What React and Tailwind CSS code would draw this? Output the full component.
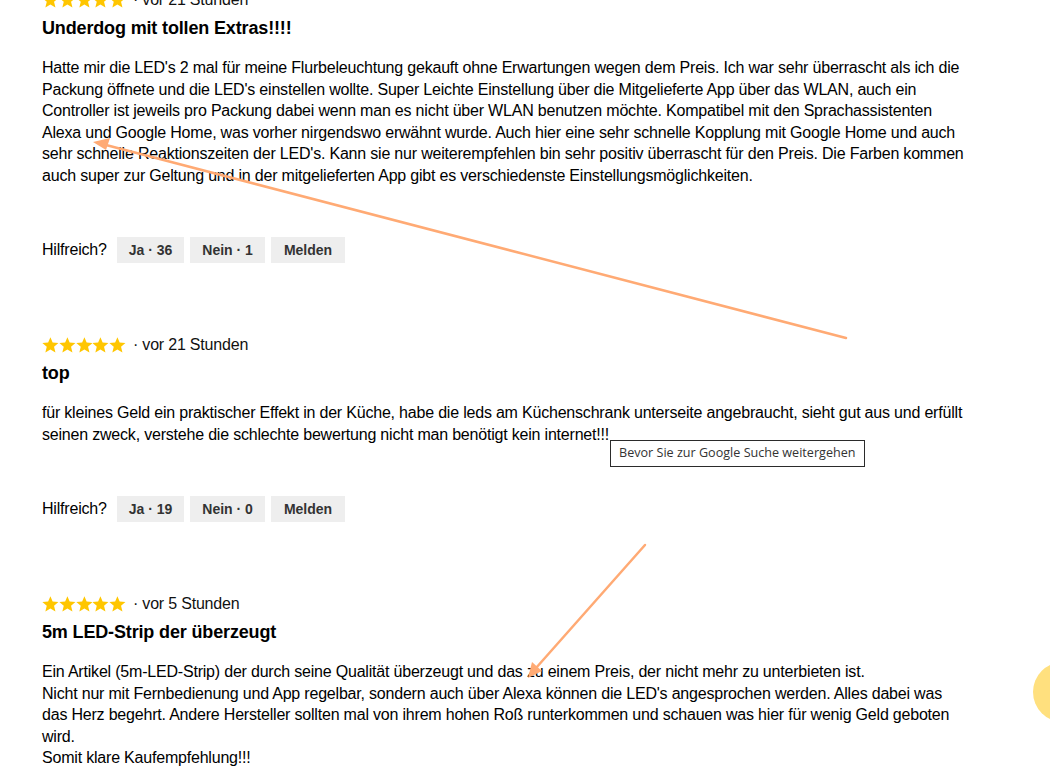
const reviews = [
  {
    time: "vor 21 Stunden",
    title: "Underdog mit tollen Extras!!!!",
    body: "Hatte mir die LED's 2 mal für meine Flurbeleuchtung gekauft ohne Erwartungen wegen dem Preis. Ich war sehr überrascht als ich die Packung öffnete und die LED's einstellen wollte. Super Leichte Einstellung über die Mitgelieferte App über das WLAN, auch ein Controller ist jeweils pro Packung dabei wenn man es nicht über WLAN benutzen möchte. Kompatibel mit den Sprachassistenten Alexa und Google Home, was vorher nirgendswo erwähnt wurde. Auch hier eine sehr schnelle Kopplung mit Google Home und auch sehr schnelle Reaktionszeiten der LED's. Kann sie nur weiterempfehlen bin sehr positiv überrascht für den Preis. Die Farben kommen auch super zur Geltung und in der mitgelieferten App gibt es verschiedenste Einstellungsmöglichkeiten.",
    yes: 36,
    no: 1,
  },
  {
    time: "vor 21 Stunden",
    title: "top",
    body: "für kleines Geld ein praktischer Effekt in der Küche, habe die leds am Küchenschrank unterseite angebraucht, sieht gut aus und erfüllt seinen zweck, verstehe die schlechte bewertung nicht man benötigt kein internet!!!",
    yes: 19,
    no: 0,
  },
  {
    time: "vor 5 Stunden",
    title: "5m LED-Strip der überzeugt",
    body: "Ein Artikel (5m-LED-Strip) der durch seine Qualität überzeugt und das zu einem Preis, der nicht mehr zu unterbieten ist.\nNicht nur mit Fernbedienung und App regelbar, sondern auch über Alexa können die LED's angesprochen werden. Alles dabei was das Herz begehrt. Andere Hersteller sollten mal von ihrem hohen Roß runterkommen und schauen was hier für wenig Geld geboten wird.\nSomit klare Kaufempfehlung!!!",
  },
];

function Stars() {
  return (
    <div className="flex">
      {[0, 1, 2, 3, 4].map((i) => (
        <svg key={i} width="16.8" height="18" viewBox="0 0 24 24">
          <path
            d="M12 1l3.2 7.6 8.3.6-6.3 5.4 2 8.1L12 18.4l-7.2 4.3 2-8.1L.5 9.2l8.3-.6z"
            fill="#ffc600"
          />
        </svg>
      ))}
    </div>
  );
}

function Review({ r }) {
  return (
    <div className="mb-[72px]">
      <div className="flex items-center h-[20px] leading-[20px]">
        <Stars />
        <span className="ml-[7px] text-[16px] tracking-[-0.2px] text-[#111]">· {r.time}</span>
      </div>
      <h3 className="mt-[6px] text-[18px] leading-[24px] font-bold tracking-[-0.15px]">{r.title}</h3>
      <p className="mt-[17px] text-[16px] leading-[21.5px] tracking-[-0.2px] whitespace-pre-line">{r.body}</p>
      {r.yes !== undefined && (
        <div className="mt-[51px] flex items-center gap-[6px]">
          <span className="text-[16px] tracking-[-0.2px] mr-[4px]">Hilfreich?</span>
          <button className="h-[26px] px-[12px] bg-[#eeeeee] text-[14px] font-bold text-[#333]">
            Ja · {r.yes}
          </button>
          <button className="h-[26px] px-[12px] bg-[#eeeeee] text-[14px] font-bold text-[#333]">
            Nein · {r.no}
          </button>
          <button className="h-[26px] px-[13px] bg-[#eeeeee] text-[14px] font-bold text-[#333]">
            Melden
          </button>
        </div>
      )}
    </div>
  );
}

export default function App() {
  return (
    <div className="relative h-[778px] w-[1050px] overflow-hidden bg-white text-black font-['Liberation_Sans',Arial,sans-serif]">
      <div className="pl-[42px] mt-[-10px] w-[968px]">
        {reviews.map((r, i) => (
          <Review key={i} r={r} />
        ))}
      </div>

      {/* annotation arrows */}
      <svg className="absolute inset-0 pointer-events-none" width="1050" height="778">
        <g stroke="#ffaa74" strokeWidth="2.5" strokeLinecap="round">
          <line x1="846" y1="338" x2="106" y2="145" />
          <line x1="645" y1="545" x2="536" y2="668" />
        </g>
        <polygon points="93,142 110,138 106,150" fill="#ffaa74" />
        <polygon points="528,678 532,662 542,671" fill="#ffaa74" />
      </svg>

      {/* tooltip */}
      <div className="absolute left-[610px] top-[440px] w-[255px] h-[27px] border border-[#2b2b2b] bg-white flex items-center px-[8px] text-[12.6px] text-[#333] font-['Open_Sans',sans-serif]">
        Bevor Sie zur Google Suche weitergehen
      </div>

      {/* chat bubble, cut off on the right */}
      <div className="absolute left-[1033px] top-[662px] w-[60px] h-[60px] rounded-full bg-[#ffe07e]" />
    </div>
  );
}
